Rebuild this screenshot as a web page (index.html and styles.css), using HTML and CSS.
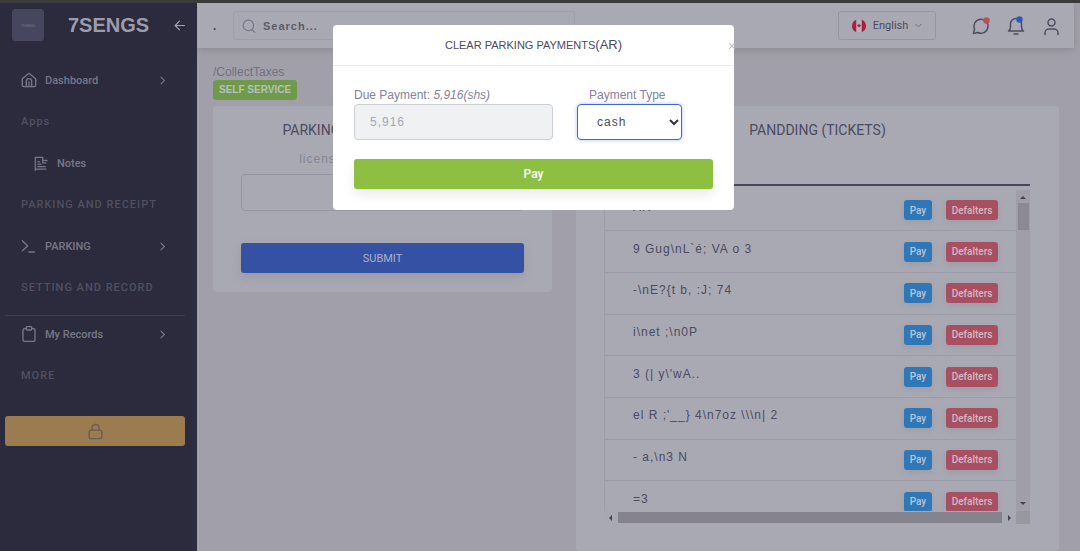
FILE: index.html
```html
<!DOCTYPE html>
<html lang="en">
<head>
<meta charset="utf-8">
<title>7SENGS</title>
<link rel="stylesheet" href="styles.css">
</head>
<body>
<div class="app">
  <aside class="sidebar">
    <div class="brand">
      <span class="brand-logo">7SENGS</span>
      <span class="brand-name">7SENGS</span>
      <button class="icon-button collapse" aria-label="Collapse menu">
        <svg class="icon" width="13" height="13" viewBox="0 0 24 24"><path d="M21 12H4M12 4l-8 8 8 8"/></svg>
      </button>
    </div>
    <nav class="menu">
      <a class="item" href="#">
        <svg class="icon" width="16" height="16" viewBox="0 0 24 24"><path d="M2 10l10-8 10 8v10a2 2 0 0 1-2 2H4a2 2 0 0 1-2-2z"/><path d="M8 22v-8a4 4 0 0 1 8 0v8M12 15v7"/></svg>
        <span>Dashboard</span>
        <svg class="icon arrow" width="9" height="9" viewBox="0 0 24 24"><path d="M8 3l9 9-9 9"/></svg>
      </a>
      <div class="section">Apps</div>
      <a class="item sub" href="#">
        <svg class="icon" width="15" height="15" viewBox="0 0 24 24"><path d="M2 23V2h12v5h7M2 21h17M6 9h3M6 13h5M6 17h12M14 7v4h5"/></svg>
        <span>Notes</span>
      </a>
      <div class="section">PARKING AND RECEIPT</div>
      <a class="item" href="#">
        <svg class="icon" width="16" height="16" viewBox="0 0 24 24"><path d="M2 4l8 8-8 7M12 21h8"/></svg>
        <span>PARKING</span>
        <svg class="icon arrow" width="9" height="9" viewBox="0 0 24 24"><path d="M8 3l9 9-9 9"/></svg>
      </a>
      <div class="section">SETTING AND RECORD</div>
      <hr class="rule">
      <a class="item compact" href="#">
        <svg class="icon" width="16" height="16" viewBox="0 0 24 24"><path d="M8 4H5a2 2 0 0 0-2 2v15a2 2 0 0 0 2 2h14a2 2 0 0 0 2-2V6a2 2 0 0 0-2-2h-3"/><rect x="8" y="1" width="8" height="5" rx="1"/></svg>
        <span>My Records</span>
        <svg class="icon arrow" width="9" height="9" viewBox="0 0 24 24"><path d="M8 3l9 9-9 9"/></svg>
      </a>
      <div class="section">MORE</div>
    </nav>
    <button class="lock" aria-label="Lock">
      <svg class="icon" width="17" height="17" viewBox="0 0 24 24"><rect x="3" y="10" width="18" height="12" rx="3"/><path d="M7 10V7a5 5 0 0 1 10 0v3"/></svg>
    </button>
  </aside>

  <div class="main">
    <header class="topbar">
      <span class="dot">.</span>
      <label class="search">
        <svg class="icon" width="14" height="14" viewBox="0 0 24 24"><circle cx="11" cy="11" r="9"/><path d="M17 18l5 5"/></svg>
        <input type="text" placeholder="Search..." aria-label="Search">
      </label>
      <button class="language">
        <svg width="14" height="14" viewBox="0 0 14 14"><path d="M4.500.8v12.400C1.800 12.500 0 10 0 7s1.800-5.500 4.500-6.200zM9.500.8v12.400C12.200 12.500 14 10 14 7s-1.800-5.500-4.500-6.200z" fill="#a8203f"/><path d="M4.500 1h5v12h-5z" fill="#b8b2bd"/><path d="M7 4.500l.7 1.200 1.300.3-.8 1.600-1 .3V9h-.4V7.900l-1-.3L5 6l1.300-.3z" fill="#a8203f"/></svg>
        <span>English</span>
        <svg class="icon" width="7" height="7" viewBox="0 0 24 24"><path d="M2 7l10 10L22 7"/></svg>
      </button>
      <div class="actions">
        <button class="icon-button" aria-label="Messages">
          <svg class="icon" width="20" height="20" viewBox="0 0 20 20"><path d="M2.500 17.500l1-4.500a7 7 0 1 1 3.200 3.500z"/><circle cx="15.500" cy="4.500" r="3.300" fill="#b5505f" stroke="none"/></svg>
        </button>
        <button class="icon-button" aria-label="Notifications">
          <svg class="icon" width="20" height="20" viewBox="0 0 20 20"><path d="M2.500 15c1.500-1 2-2.200 2-4V8a5.500 5.500 0 0 1 11 0v3c0 1.800.5 3 2 4zM8 18h4"/><circle cx="13.500" cy="3.500" r="3.200" fill="#2c58c0" stroke="none"/></svg>
        </button>
        <button class="icon-button" aria-label="Account">
          <svg class="icon" width="20" height="20" viewBox="0 0 20 20"><circle cx="10.500" cy="6.500" r="3.500"/><path d="M4 18.500V17a4 4 0 0 1 4-4h5a4 4 0 0 1 4 4v1.500"/></svg>
        </button>
      </div>
    </header>

    <main class="content">
      <div class="crumb">/CollectTaxes</div>
      <span class="badge">SELF SERVICE</span>
      <div class="cards">
        <form class="card entry">
          <h2 class="card-title">PARKING TICKETS (PAYMENTS)</h2>
          <label class="entry-label" for="plate">license plate number (No.)</label>
          <input class="entry-input" id="plate" type="text">
          <button class="submit" type="button">SUBMIT</button>
        </form>
        <section class="card tickets">
          <h2 class="card-title">PANDDING (TICKETS)</h2>
          <div class="scroller">
            <div class="viewport">
              <table class="table">
                <tbody>
                  <tr><td>AR</td><td class="ops"><button class="pay">Pay</button><button class="defaulter">Defalters</button></td></tr>
                  <tr><td>9 Gug\nL`é; VA o 3</td><td class="ops"><button class="pay">Pay</button><button class="defaulter">Defalters</button></td></tr>
                  <tr><td>-\nE?{t b, :J; 74</td><td class="ops"><button class="pay">Pay</button><button class="defaulter">Defalters</button></td></tr>
                  <tr><td>i\net ;\n0P</td><td class="ops"><button class="pay">Pay</button><button class="defaulter">Defalters</button></td></tr>
                  <tr><td>3 (| y\'wA..</td><td class="ops"><button class="pay">Pay</button><button class="defaulter">Defalters</button></td></tr>
                  <tr><td>el R ;'__} 4\n7oz \\\n| 2</td><td class="ops"><button class="pay">Pay</button><button class="defaulter">Defalters</button></td></tr>
                  <tr><td>- a,\n3 N</td><td class="ops"><button class="pay">Pay</button><button class="defaulter">Defalters</button></td></tr>
                  <tr><td>=3</td><td class="ops"><button class="pay">Pay</button><button class="defaulter">Defalters</button></td></tr>
                </tbody>
              </table>
            </div>
            <div class="bar-v">
              <svg width="6" height="4" viewBox="0 0 6 4"><path d="M0 4l3-3 3 3z"/></svg>
              <span class="thumb-v"></span>
              <svg width="6" height="4" viewBox="0 0 6 4"><path d="M0 0l3 3 3-3z"/></svg>
            </div>
            <div class="bar-h">
              <svg width="4" height="6" viewBox="0 0 4 6"><path d="M4 0L1 3l3 3z"/></svg>
              <span class="thumb-h"></span>
              <svg width="4" height="6" viewBox="0 0 4 6"><path d="M0 0l3 3-3 3z"/></svg>
            </div>
            <div class="corner"></div>
          </div>
        </section>
      </div>
    </main>
  </div>
</div>

<div class="overlay">
  <div class="modal" role="dialog" aria-labelledby="modal-title">
    <div class="modal-head">
      <h1 class="modal-title" id="modal-title">CLEAR PARKING PAYMENTS<span class="code">(AR)</span></h1>
      <button class="close" aria-label="Close">×</button>
    </div>
    <form class="modal-body">
      <div class="fields">
        <div class="field wide">
          <label for="due">Due Payment: <i>5,916(shs)</i></label>
          <input class="control" id="due" type="text" value="5,916" disabled>
        </div>
        <div class="field">
          <label class="indent" for="type">Payment Type</label>
          <div class="select">
            <select class="control" id="type"><option>cash</option></select>
            <svg class="caret" width="10" height="8" viewBox="0 0 10 8"><path d="M1 2l4 4 4-4"/></svg>
          </div>
        </div>
      </div>
      <button class="confirm" type="button">Pay</button>
    </form>
  </div>
</div>
</body>
</html>
```

FILE: styles.css
```css
* { box-sizing: border-box; }

body {
  margin: 0;
  font-family: "Liberation Sans", Arial, sans-serif;
  font-size: 12px;
  color: #4b4b5e;
  background: #a1a0aa;
}

button, input, select { font: inherit; margin: 0; }
button { border: 0; padding: 0; background: none; color: inherit; }
a { color: inherit; text-decoration: none; }

.icon {
  fill: none;
  stroke: currentColor;
  stroke-width: 2;
  stroke-linecap: round;
  stroke-linejoin: round;
  flex: none;
}

.icon-button { display: flex; }

.app {
  display: flex;
  height: 100vh;
  border-top: 3px solid #3b3b3b;
  overflow: hidden;
}

/* Sidebar */
.sidebar {
  position: relative;
  z-index: 1;
  width: 197px;
  flex: none;
  background: #2b2b3d;
  color: #777786;
  font-family: Roboto, sans-serif;
  font-size: 11px;
}

.brand {
  display: flex;
  align-items: center;
  justify-content: space-between;
  height: 56px;
  padding: 0 11px 12px 12px;
}

.brand-logo {
  display: grid;
  place-items: center;
  width: 32px;
  height: 32px;
  border-radius: 3px;
  background: #46465e;
  color: #77778a;
  font-size: 4px;
}

.brand-name {
  font-family: "Liberation Sans", Arial, sans-serif;
  font-size: 20px;
  font-weight: bold;
  color: #9c9cac;
}

.collapse { color: #a5a5b2; }

.item {
  display: flex;
  align-items: center;
  gap: 8px;
  height: 42px;
  padding: 0 30px 0 21px;
  font-weight: 500;
}

.item.sub { padding-left: 34px; }
.item.compact { height: 36px; }
.arrow { margin-left: auto; stroke-width: 3; }

.section {
  height: 41px;
  padding-left: 21px;
  line-height: 41px;
  letter-spacing: 1px;
  font-weight: 500;
  color: #505061;
}

.rule {
  margin: 7px 12px 0 5px;
  border: 0;
  border-top: 1px solid #3d3d4e;
}

.item.compact + .section { margin-top: 3px; }

.lock {
  display: grid;
  place-items: center;
  width: calc(100% - 17px);
  height: 30px;
  margin: 20px 12px 0 5px;
  border-radius: 3px;
  background: #9b7b50;
  color: #6f5c50;
}

/* Top bar */
.main {
  display: flex;
  flex-direction: column;
  flex: 1;
  min-width: 0;
}

.topbar {
  display: flex;
  align-items: center;
  height: 45px;
  flex: none;
  margin-right: 6px;
  padding: 0 13px 0 16px;
  background: #a9a9b4;
  box-shadow: 0 2px 8px #8b8b95;
}

.dot { width: 20px; font-weight: bold; }

.search {
  display: flex;
  align-items: center;
  gap: 7px;
  width: 342px;
  height: 29px;
  padding-left: 8px;
  border: 1px solid #a09fac;
  border-radius: 3px;
  color: #777785;
}

.search input {
  flex: 1;
  min-width: 0;
  border: 0;
  padding: 0;
  outline: 0;
  background: none;
  font-size: 11px;
  font-weight: bold;
  letter-spacing: 1px;
}

.search input::placeholder { color: #5c5c69; opacity: 1; }

.language {
  display: flex;
  align-items: center;
  justify-content: center;
  gap: 7px;
  width: 98px;
  height: 29px;
  margin-left: auto;
  border: 1px solid #9695a3;
  border-radius: 3px;
  font-family: Roboto, sans-serif;
  font-size: 11px;
}

.actions {
  display: flex;
  gap: 15px;
  margin-left: 35px;
  color: #4e4e60;
}

.actions .icon { stroke-width: 1.5; }

/* Page content */
.content {
  display: flex;
  flex-direction: column;
  align-items: flex-start;
  flex: 1;
  padding: 17px 21px 0 16px;
}

.crumb {
  line-height: 14px;
  font-size: 12px;
  color: #71717f;
}

.badge {
  height: 20px;
  margin-top: 1px;
  padding: 0 6px;
  border-radius: 3px;
  background: #6f9a4b;
  color: #b7c0bb;
  font-size: 10px;
  font-weight: bold;
  line-height: 20px;
}

.cards {
  display: grid;
  grid-template-columns: 339fr 483fr;
  gap: 24px;
  width: 100%;
  flex: 1;
  margin-top: 6px;
}

.card {
  min-width: 0;
  padding: 16px 28px 0;
  border-radius: 4px;
  background: #a9a9b4;
}

.card-title {
  margin: 0;
  font-family: Roboto, sans-serif;
  font-size: 14px;
  font-weight: 400;
  line-height: 16px;
  text-align: center;
}

.entry {
  display: flex;
  flex-direction: column;
  align-self: start;
  padding-bottom: 19px;
}

.entry-label {
  margin-top: 13px;
  line-height: 16px;
  text-align: center;
  letter-spacing: 1px;
  color: #858592;
}

.entry-input {
  height: 37px;
  margin-top: 7px;
  border: 1px solid #9695a4;
  border-radius: 4px;
  background: none;
}

.submit {
  height: 30px;
  margin-top: 32px;
  border-radius: 3px;
  background: #3551a3;
  color: #a9b0cc;
  font-family: Roboto, sans-serif;
  font-size: 11px;
  box-shadow: 0 4px 10px #9999a3;
}

.scroller {
  display: grid;
  grid-template-columns: 1fr 14px;
  grid-template-rows: 321px 13px;
  margin: 46px 1px 0 0;
  padding-top: 4px;
  border-top: 2px solid #47475f;
}

.viewport {
  overflow: hidden;
  border-left: 1px solid #9e9daa;
}

.table {
  width: 100%;
  height: 333px;
  border-collapse: collapse;
}

.table td {
  padding: 0 0 6px 28px;
  border-bottom: 1px solid #9c9ba8;
  letter-spacing: 1px;
}

.table .ops {
  width: 131px;
  padding: 0 18px 0 0;
  letter-spacing: 0;
  text-align: right;
  white-space: nowrap;
}

.pay, .defaulter {
  height: 20px;
  border-radius: 3px;
  background: #3077b8;
  color: #bcc6d6;
  font-family: Roboto, sans-serif;
  font-size: 10px;
  font-weight: 500;
  box-shadow: 0 3px 6px #9d9da8;
}

.pay { width: 28px; }

.defaulter {
  width: 52px;
  margin-left: 14px;
  background: #a94f62;
  color: #d0b9c2;
}

.bar-v, .bar-h, .corner { background: #a09fa9; }

.bar-v {
  display: flex;
  flex-direction: column;
  align-items: center;
  justify-content: space-between;
  padding: 5px 0;
  fill: #44444e;
}

.thumb-v {
  width: 11px;
  height: 27px;
  margin: 4px 0 auto;
  background: #8b8a94;
}

.bar-h {
  display: flex;
  align-items: center;
  gap: 6px;
  padding: 0 4px 0 4px;
  background: #a8a8b2;
  fill: #44444e;
}

.thumb-h {
  flex: 1;
  height: 11px;
  background: #85848e;
}

.corner { background: #99989f; }

/* Payment dialog */
.overlay {
  position: absolute;
  inset: 0;
  z-index: 2;
  display: flex;
  align-items: flex-start;
  justify-content: center;
  padding: 25px 13px 0 0;
}

.modal {
  width: 401px;
  border-radius: 4px;
  background: #fff;
}

.modal-head {
  position: relative;
  border-bottom: 1px solid #ececef;
}

.modal-title {
  margin: 0;
  font-size: 11px;
  font-weight: 400;
  line-height: 40px;
  text-align: center;
  color: #4a4a5e;
}

.code { font-size: 13px; line-height: 1; }

.close {
  position: absolute;
  top: 13px;
  right: -2px;
  font-size: 14px;
  color: #c2c2c8;
}

.modal-body {
  padding: 21px 21px 21px;
}

.fields {
  display: flex;
  gap: 24px;
}

.field {
  display: flex;
  flex-direction: column;
  width: 105px;
  font-size: 12px;
  line-height: 17px;
  color: #83839a;
}

.field.wide { width: 199px; }
.field .indent { padding-left: 12px; }

.control {
  width: 100%;
  height: 36px;
  padding: 0 15px;
  border: 1px solid #ccd0d4;
  border-radius: 4px;
  background: #f0f1f3;
  color: #a6a6b2;
  font-size: 12px;
  letter-spacing: 1px;
}

.select { position: relative; }

.select .control {
  appearance: none;
  padding-left: 19px;
  border-color: #3f66d8;
  background: #fff;
  color: #4a4a60;
  box-shadow: 0 0 4px #b3c4f5;
}

.caret {
  position: absolute;
  top: 14px;
  right: 3px;
  fill: none;
  stroke: #333;
  stroke-width: 2;
}

.confirm {
  width: 100%;
  height: 30px;
  margin-top: 19px;
  border-radius: 3px;
  background: #8dbf42;
  color: #fff;
  font-family: Roboto, sans-serif;
  font-size: 12px;
  font-weight: 500;
  box-shadow: 0 6px 12px #ececec;
}
```
